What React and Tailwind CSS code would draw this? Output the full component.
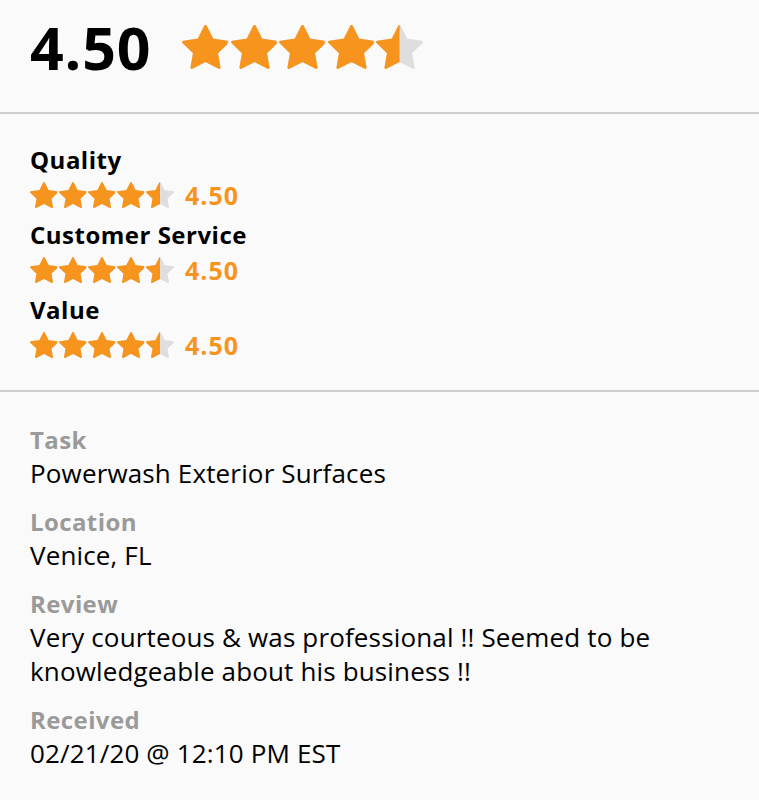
import { useId } from "react";

const STAR =
  "M12 2.5l2.94 5.96 6.56.95-4.75 4.63 1.12 6.54L12 17.5l-5.87 3.08 1.12-6.54L2.5 9.41l6.56-.95L12 2.5z";

// single star, fill = fraction of orange from the left
function Star({ w, h, fill = 1 }) {
  const id = useId();
  return (
    <svg width={w} height={h} viewBox="1.9 1.9 20.2 19.3" preserveAspectRatio="none" className="shrink-0">
      <defs>
        <clipPath id={id}>
          <rect x="0" y="0" width={2.5 + 19 * fill} height="24" />
        </clipPath>
      </defs>
      <path d={STAR} fill="#dedede" stroke="#dedede" strokeWidth="1.2" strokeLinejoin="round" />
      <path
        d={STAR}
        fill="#f7941d"
        stroke="#f7941d"
        strokeWidth="1.2"
        strokeLinejoin="round"
        clipPath={`url(#${id})`}
      />
    </svg>
  );
}

function Stars({ value, w, h, gap }) {
  return (
    <div className={`flex ${gap}`}>
      {[0, 1, 2, 3, 4].map((i) => (
        <Star key={i} w={w} h={h} fill={Math.max(0, Math.min(1, value - i))} />
      ))}
    </div>
  );
}

const ratings = [
  { label: "Quality", value: 4.5 },
  { label: "Customer Service", value: 4.5 },
  { label: "Value", value: 4.5 },
];

const details = [
  { label: "Task", text: "Powerwash Exterior Surfaces" },
  { label: "Location", text: "Venice, FL" },
  {
    label: "Review",
    text: "Very courteous & was professional !! Seemed to be knowledgeable about his business !!",
  },
  { label: "Received", text: "02/21/20 @ 12:10 PM EST" },
];

export default function App() {
  return (
    <div
      className="min-h-[800px] w-[759px] bg-[#fafafa] text-black"
      style={{ fontFamily: "'Open Sans', 'Liberation Sans', sans-serif" }}
    >
      {/* Overall score */}
      <div className="flex h-[112px] items-center gap-[31px] pl-[30px] pb-[18px]">
        <span className="text-[59px] font-bold leading-none tracking-[0.8px]">4.50</span>
        <Stars value={4.5} w={47} h={44} gap="gap-[1.5px]" />
      </div>
      <div className="h-[2px] bg-[#cfcfcf]" />

      {/* Category ratings */}
      <div className="flex flex-col gap-[11px] pl-[30px] pt-[31px] pb-[31px]">
        {ratings.map((r) => (
          <div key={r.label} className="flex flex-col">
            <span className="text-[24px] font-bold leading-[30px] tracking-[0.5px]">{r.label}</span>
            <div className="mt-[6px] flex h-[28px] items-center gap-[11px]">
              <Stars value={r.value} w={28} h={26} gap="gap-[1px]" />
              <span className="text-[25px] font-bold leading-none text-[#f7941d] tracking-[1px]">
                {r.value.toFixed(2)}
              </span>
            </div>
          </div>
        ))}
      </div>
      <div className="h-[2px] bg-[#cfcfcf]" />

      {/* Details */}
      <div className="flex flex-col gap-[15px] pl-[30px] pr-[30px] pt-[31px]">
        {details.map((d) => (
          <div key={d.label} className="flex flex-col">
            <span className="text-[24px] font-bold leading-[33px] text-[#9a9a9a] tracking-[0.4px]">
              {d.label}
            </span>
            <span className="text-[26px] leading-[34px] tracking-[0.15px]">{d.text}</span>
          </div>
        ))}
      </div>
    </div>
  );
}
